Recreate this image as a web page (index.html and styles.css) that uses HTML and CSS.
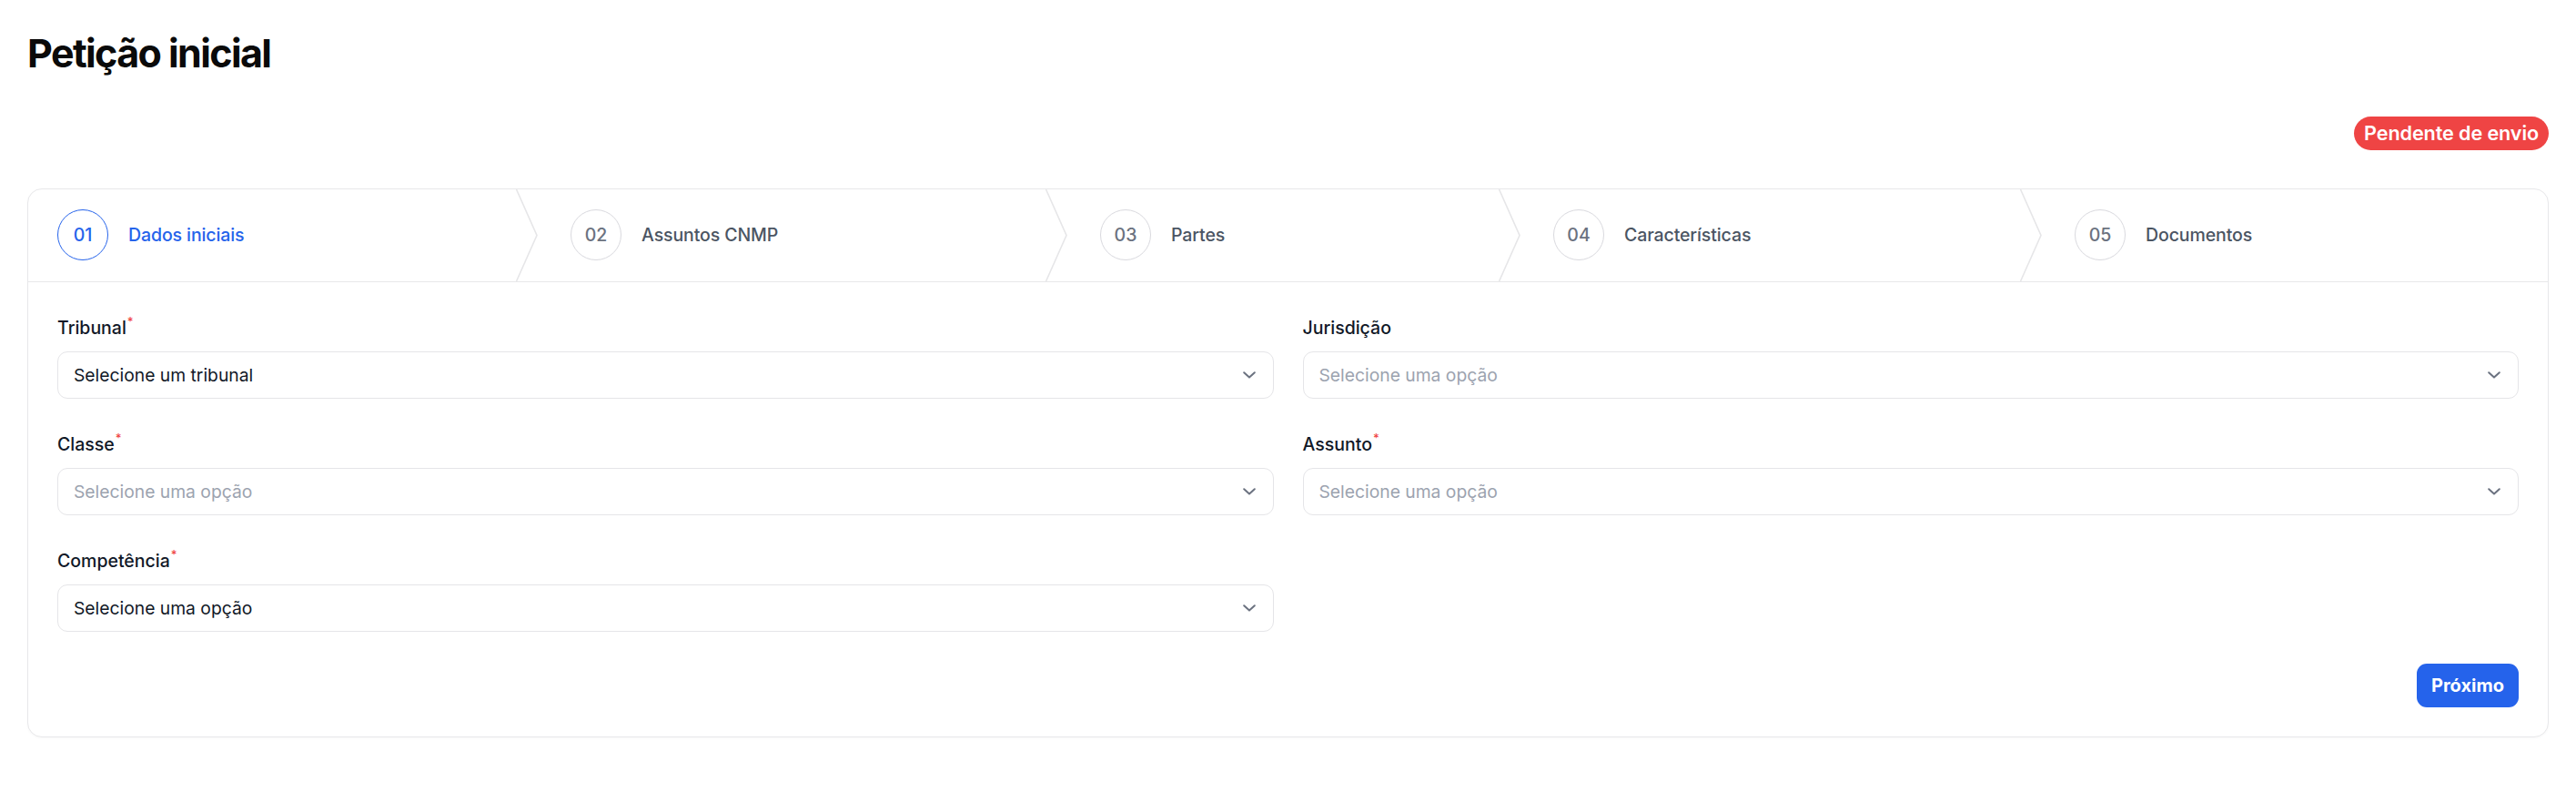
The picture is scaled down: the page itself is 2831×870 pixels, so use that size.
FILE: index.html
```html
<!DOCTYPE html>
<html lang="pt-BR">
<head>
<meta charset="utf-8">
<title>Petição inicial</title>
<link rel="stylesheet" href="styles.css">
</head>
<body>
<div class="page">
  <h1 class="title">Petição inicial</h1>
  <div class="status-row"><span class="badge">Pendente de envio</span></div>
  <section class="card">
    <nav class="stepper">
      <div class="step active">
        <span class="num">01</span><span class="step-label">Dados iniciais</span>
        <svg class="chev" viewBox="0 0 24 101" preserveAspectRatio="none"><path d="M0.5 0 L23 50.5 L0.5 101"/></svg>
      </div>
      <div class="step">
        <span class="num">02</span><span class="step-label">Assuntos CNMP</span>
        <svg class="chev" viewBox="0 0 24 101" preserveAspectRatio="none"><path d="M0.5 0 L23 50.5 L0.5 101"/></svg>
      </div>
      <div class="step">
        <span class="num">03</span><span class="step-label">Partes</span>
        <svg class="chev" viewBox="0 0 24 101" preserveAspectRatio="none"><path d="M0.5 0 L23 50.5 L0.5 101"/></svg>
      </div>
      <div class="step">
        <span class="num">04</span><span class="step-label">Características</span>
        <svg class="chev" viewBox="0 0 24 101" preserveAspectRatio="none"><path d="M0.5 0 L23 50.5 L0.5 101"/></svg>
      </div>
      <div class="step last">
        <span class="num">05</span><span class="step-label">Documentos</span>
      </div>
    </nav>
    <form class="form">
      <div class="fields">
        <div class="field">
          <label class="label">Tribunal<span class="req">*</span></label>
          <div class="select"><span class="value">Selecione um tribunal</span><svg class="caret" viewBox="0 0 14 8"><path d="M1.2 1.2 L7 6.6 L12.8 1.2"/></svg></div>
        </div>
        <div class="field">
          <label class="label">Jurisdição</label>
          <div class="select"><span class="value placeholder">Selecione uma opção</span><svg class="caret" viewBox="0 0 14 8"><path d="M1.2 1.2 L7 6.6 L12.8 1.2"/></svg></div>
        </div>
        <div class="field">
          <label class="label">Classe<span class="req">*</span></label>
          <div class="select"><span class="value placeholder">Selecione uma opção</span><svg class="caret" viewBox="0 0 14 8"><path d="M1.2 1.2 L7 6.6 L12.8 1.2"/></svg></div>
        </div>
        <div class="field">
          <label class="label">Assunto<span class="req">*</span></label>
          <div class="select"><span class="value placeholder">Selecione uma opção</span><svg class="caret" viewBox="0 0 14 8"><path d="M1.2 1.2 L7 6.6 L12.8 1.2"/></svg></div>
        </div>
        <div class="field">
          <label class="label">Competência<span class="req">*</span></label>
          <div class="select"><span class="value">Selecione uma opção</span><svg class="caret" viewBox="0 0 14 8"><path d="M1.2 1.2 L7 6.6 L12.8 1.2"/></svg></div>
        </div>
      </div>
      <div class="actions"><button type="button" class="btn-primary">Próximo</button></div>
    </form>
  </section>
</div>
</body>
</html>
```
FILE: styles.css
```css
* { box-sizing: border-box; }
html, body { margin: 0; padding: 0; background: #ffffff; }
body {
  font-family: Inter, "Noto Sans", sans-serif;
  color: #111827;
}
.page {
  padding: 30px 30px 40px 30px;
}
.title {
  margin: 0;
  font-size: 43px;
  line-height: 57.6px;
  font-weight: 700;
  color: #0a0a0a;
  letter-spacing: -1.6px;
}
.status-row {
  display: flex;
  justify-content: flex-end;
  margin-top: 40px;
}
.badge {
  display: inline-block;
  height: 37px;
  line-height: 37px;
  padding: 0 11px;
  border-radius: 999px;
  background: #ef4444;
  color: #ffffff;
  font-size: 21.6px;
  font-weight: 600;
  letter-spacing: -0.1px;
}
.card {
  margin-top: 42px;
  border: 1px solid #e8e8ea;
  border-radius: 16px;
  background: #ffffff;
  box-shadow: 0 1px 3px rgba(0,0,0,0.03);
}
.stepper {
  display: grid;
  grid-template-columns: 560fr 582fr 498fr 573fr 556fr;
  height: 102px;
  border-bottom: 1px solid #e8e8ea;
}
.step {
  display: flex;
  align-items: center;
  padding-left: 36px;
  height: 101px;
}
.step:first-child { padding-left: 32px; }
.num {
  flex: none;
  width: 56px;
  height: 56px;
  border-radius: 50%;
  border: 1.6px solid #d9d9de;
  display: flex;
  align-items: center;
  justify-content: center;
  font-size: 19.5px;
  font-weight: 500;
  color: #6b7280;
}
.step-label {
  margin-left: 22px;
  font-size: 19.5px;
  font-weight: 500;
  color: #4b5563;
  white-space: nowrap;
  letter-spacing: -0.1px;
}
.step.active .num { border-color: #2563eb; color: #2563eb; }
.step.active .step-label { color: #2563eb; }
.chev {
  flex: none;
  margin-left: auto;
  width: 24px;
  height: 101px;
  fill: none;
  stroke: #e6e6e8;
  stroke-width: 1.6;
}
.form {
  padding: 36px 32px 32px 32px;
}
.fields {
  display: grid;
  grid-template-columns: 1fr 1fr;
  column-gap: 32px;
  row-gap: 36px;
}
.field {
  display: flex;
  flex-direction: column;
}
.label {
  font-size: 19.5px;
  line-height: 28px;
  font-weight: 500;
  color: #111827;
  margin-bottom: 12px;
}
.req {
  color: #ef4444;
  font-size: 13px;
  vertical-align: top;
  line-height: 14px;
  margin-left: 1px;
}
.select {
  height: 52px;
  border: 1px solid #e5e5e8;
  border-radius: 11px;
  display: flex;
  align-items: center;
  padding: 0 19px 0 17px;
  background: #ffffff;
}
.value {
  flex: 1;
  font-size: 19.3px;
  color: #111827;
}
.value.placeholder { color: #9ca3af; }
.caret {
  width: 14px;
  height: 8px;
  fill: none;
  stroke: #6b7280;
  stroke-width: 2;
  stroke-linecap: round;
  stroke-linejoin: round;
}
.actions {
  display: flex;
  justify-content: flex-end;
  margin-top: 35px;
}
.btn-primary {
  height: 48px;
  padding: 0 16px;
  border: none;
  border-radius: 11px;
  background: #2563eb;
  color: #ffffff;
  font-family: Inter, "Noto Sans", sans-serif;
  font-size: 20px;
  font-weight: 700;
}
```
